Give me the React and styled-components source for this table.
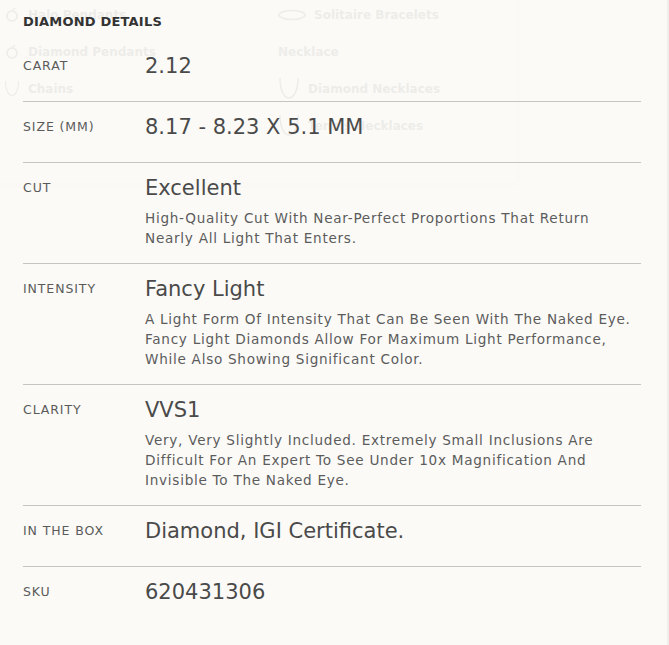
import React from 'react';
import styled, {createGlobalStyle} from 'styled-components';

const Global = createGlobalStyle`
  html, body {
    margin: 0;
    background: #fbfaf7;
  }
  body {
    font-family: "DejaVu Sans", "Liberation Sans", sans-serif;
  }
`;

const Page = styled.div`
  position: relative;
  min-height: 645px;
  box-sizing: border-box;
  padding: 12px 26px 0 23px;
  border-right: 2px solid #efeeeb;
`;

// faded mega-menu left over from the header, sitting behind the details
const GhostMenu = styled.div`
  position: absolute;
  left: 0;
  top: -28px;
  width: 516px;
  height: 210px;
  background: #fcfbf9;
  box-shadow: 0 2px 6px rgba(0, 0, 0, 0.03);
  display: grid;
  grid-template-columns: 278px 1fr;
  pointer-events: none;
  opacity: 0.06;
`;

const GhostCol = styled.div`
  display: flex;
  flex-direction: column;
  padding-top: 24px;
  padding-left: ${p => p.$pad}px;
`;

const GhostItem = styled.div`
  display: flex;
  align-items: center;
  gap: 8px;
  height: 37px;
  font-size: 12px;
  font-weight: ${p => (p.$bold ? 700 : 600)};
  color: #222;
`;

const Details = styled.section`
  position: relative;
`;

const Heading = styled.h3`
  margin: 0 0 9px;
  font-size: 13px;
  line-height: 20px;
  font-weight: 700;
  letter-spacing: 0.2px;
  color: #333;
`;

const Row = styled.div`
  display: grid;
  grid-template-columns: 122px 1fr;
  padding: 12px 0 15px;
  border-bottom: ${p => (p.$last ? 'none' : '1px solid #c6c5c2')};
`;

const Label = styled.div`
  font-size: 12.5px;
  line-height: 26px;
  letter-spacing: 0.9px;
  color: #5a5a5a;
  text-transform: uppercase;
`;

const Value = styled.div`
  font-size: 21px;
  line-height: 26px;
  color: #4a4a4a;
  margin-bottom: 7px;
`;

const Desc = styled.p`
  margin: 0;
  font-size: 13.6px;
  line-height: 20px;
  letter-spacing: 0.72px;
  color: #5c5c5c;
`;

const rows = [
  {label: 'Carat', value: '2.12'},
  {label: 'Size (mm)', value: '8.17 - 8.23 X 5.1 MM'},
  {
    label: 'Cut',
    value: 'Excellent',
    desc: [
      'High-Quality Cut With Near-Perfect Proportions That Return',
      'Nearly All Light That Enters.',
    ],
  },
  {
    label: 'Intensity',
    value: 'Fancy Light',
    desc: [
      'A Light Form Of Intensity That Can Be Seen With The Naked Eye.',
      'Fancy Light Diamonds Allow For Maximum Light Performance,',
      'While Also Showing Significant Color.',
    ],
  },
  {
    label: 'Clarity',
    value: 'VVS1',
    desc: [
      'Very, Very Slightly Included. Extremely Small Inclusions Are',
      'Difficult For An Expert To See Under 10x Magnification And',
      'Invisible To The Naked Eye.',
    ],
  },
  {label: 'In the box', value: 'Diamond, IGI Certificate.'},
  {label: 'SKU', value: '620431306'},
];

const Ring = () => (
  <svg width="16" height="16" viewBox="0 0 16 16" fill="none" stroke="#222" strokeWidth="1.5">
    <circle cx="8" cy="9" r="5" />
    <path d="M8 4l3-3" />
  </svg>
);

const Chain = ({w = 22}) => (
  <svg width={w} height="26" viewBox="0 0 22 26" fill="none" stroke="#222" strokeWidth="1.5">
    <path d="M2 2c0 12 4 20 9 20s9-8 9-20" />
  </svg>
);

const Bracelet = () => (
  <svg width="28" height="12" viewBox="0 0 28 12" fill="none" stroke="#222" strokeWidth="1.5">
    <ellipse cx="14" cy="6" rx="13" ry="4.5" />
  </svg>
);

const App = () => (
  <>
    <Global />
    <Page>
      <GhostMenu>
        <GhostCol $pad={4}>
          <GhostItem><Ring />Halo Pendants</GhostItem>
          <GhostItem><Ring />Diamond Pendants</GhostItem>
          <GhostItem><Chain w={16} />Chains</GhostItem>
        </GhostCol>
        <GhostCol $pad={0}>
          <GhostItem><Bracelet />Solitaire Bracelets</GhostItem>
          <GhostItem $bold>Necklace</GhostItem>
          <GhostItem><Chain />Diamond Necklaces</GhostItem>
          <GhostItem><Chain />Tennis Necklaces</GhostItem>
        </GhostCol>
      </GhostMenu>
      <Details>
        <Heading>DIAMOND DETAILS</Heading>
        {rows.map((r, i) => (
          <Row key={r.label} $last={i === rows.length - 1}>
            <Label>{r.label}</Label>
            <div>
              <Value>{r.value}</Value>
              {r.desc && (
                <Desc>
                  {r.desc.map((line, j) => (
                    <React.Fragment key={j}>
                      {line}
                      {j < r.desc.length - 1 && <br />}
                    </React.Fragment>
                  ))}
                </Desc>
              )}
            </div>
          </Row>
        ))}
      </Details>
    </Page>
  </>
);

export default App;
